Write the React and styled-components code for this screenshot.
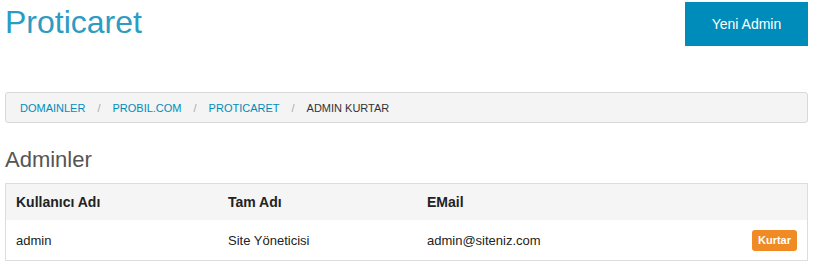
import React from "react";
import styled, { createGlobalStyle } from "styled-components";

const Global = createGlobalStyle`
  html, body { margin: 0; padding: 0; background: #fff; }
  body { font-family: "Liberation Sans", Arial, Helvetica, sans-serif; color: #222; }
  * { box-sizing: border-box; }
`;

const Page = styled.div`
  width: 815px;
  padding: 0 7px 0 5px;
`;

const Header = styled.div`
  display: flex;
  justify-content: space-between;
  align-items: flex-start;
  height: 46px;
`;

const Title = styled.h1`
  margin: 6px 0 0 0;
  font-size: 32px;
  line-height: 32px;
  font-weight: normal;
  color: #2b9cc3;
`;

const PrimaryButton = styled.button`
  margin-top: 2px;
  width: 123px;
  height: 44px;
  border: none;
  background: #008cba;
  color: #fff;
  font-family: inherit;
  font-size: 14px;
  cursor: pointer;
`;

const Breadcrumb = styled.nav`
  margin-top: 46px;
  height: 31px;
  display: flex;
  align-items: center;
  padding: 0 14px;
  background: #f4f4f4;
  border: 1px solid #d8d8d8;
  border-radius: 3px;
  font-size: 11px;
  text-transform: uppercase;
`;

const Crumb = styled.span`
  color: ${(p) => (p.$current ? "#333" : "#008cba")};
  &:not(:first-child)::before {
    content: "/";
    color: #aaa;
    margin: 0 12px;
  }
`;

const SectionTitle = styled.h2`
  margin: 26px 0 12px 0;
  font-size: 22px;
  line-height: 22px;
  font-weight: normal;
  color: #555;
`;

const Table = styled.div`
  border: 1px solid #ddd;
`;

const Row = styled.div`
  display: grid;
  grid-template-columns: 212px 199px 1fr auto;
  align-items: center;
  height: ${(p) => (p.$head ? "36px" : "40px")};
  background: ${(p) => (p.$head ? "#f5f5f5" : "#fff")};
  font-size: ${(p) => (p.$head ? "14px" : "13px")};
  font-weight: ${(p) => (p.$head ? "bold" : "normal")};
  color: #222;
`;

const Cell = styled.div`
  padding: 0 10px;
`;

const SmallButton = styled.button`
  height: 21px;
  padding: 0 6px;
  border: none;
  border-radius: 3px;
  background: #f08a24;
  color: #fff;
  font-family: inherit;
  font-size: 11px;
  font-weight: bold;
  cursor: pointer;
`;

const rows = [{ user: "admin", name: "Site Yöneticisi", email: "admin@siteniz.com" }];

export default function App() {
  return (
    <Page>
      <Global />
      <Header>
        <Title>Proticaret</Title>
        <PrimaryButton>Yeni Admin</PrimaryButton>
      </Header>
      <Breadcrumb>
        <Crumb>Domainler</Crumb>
        <Crumb>probil.com</Crumb>
        <Crumb>Proticaret</Crumb>
        <Crumb $current>Admin Kurtar</Crumb>
      </Breadcrumb>
      <SectionTitle>Adminler</SectionTitle>
      <Table>
        <Row $head>
          <Cell>Kullanıcı Adı</Cell>
          <Cell>Tam Adı</Cell>
          <Cell>EMail</Cell>
          <Cell />
        </Row>
        {rows.map((r) => (
          <Row key={r.user}>
            <Cell>{r.user}</Cell>
            <Cell>{r.name}</Cell>
            <Cell>{r.email}</Cell>
            <Cell>
              <SmallButton>Kurtar</SmallButton>
            </Cell>
          </Row>
        ))}
      </Table>
    </Page>
  );
}
